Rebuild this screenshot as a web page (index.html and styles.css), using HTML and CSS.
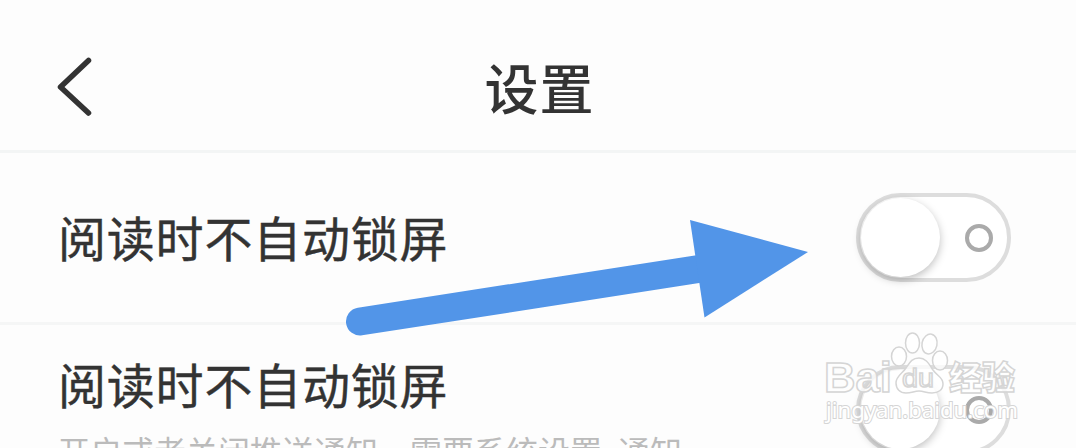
FILE: index.html
```
<!DOCTYPE html>
<html lang="zh-CN">
<head>
    <meta charset="UTF-8" />
    <meta name="viewport" content="width=device-width, initial-scale=1.0" />
    <title>设置</title>
    <link rel="stylesheet" href="styles.css">
</head>
<body>
    <header class="header">
        <a class="back" href="#" aria-label="返回">
            <svg width="36" height="60" viewBox="0 0 36 60" fill="none" stroke="#333" stroke-width="5.5" stroke-linecap="round" stroke-linejoin="round">
                <path d="M32.500 3.500L4.500 30L32.500 56" />
            </svg>
        </a>
        <h1 class="title">设置</h1>
    </header>

    <main class="settings">
        <div class="row">
            <div class="label">阅读时不自动锁屏</div>
            <button class="switch" type="button" aria-label="阅读时不自动锁屏">
                <span class="thumb"></span>
                <span class="ring"></span>
            </button>
        </div>
        <div class="row">
            <div class="text">
                <div class="label">阅读时不自动锁屏</div>
                <div class="desc">开启或者关闭推送通知，需要系统设置<span class="dash">-</span>通知</div>
            </div>
            <button class="switch" type="button" aria-label="推送通知">
                <span class="thumb"></span>
                <span class="ring"></span>
            </button>
        </div>
    </main>

    <!-- Arrow pointing at the first switch -->
    <svg class="arrow" width="464" height="120" viewBox="345 218 464 120">
        <path d="M360 321.5L705 268" stroke="#5295e8" stroke-width="28" stroke-linecap="round" fill="none" />
        <path d="M690 220L808 252L704.5 317.5Z" fill="#5295e8" />
    </svg>

    <!-- Watermark -->
    <svg class="watermark" width="200" height="100" viewBox="822 330 200 100">
        <g class="mark">
            <text class="latin" x="824" y="392" font-size="43" textLength="68" lengthAdjust="spacingAndGlyphs">Bai</text>
            <ellipse cx="899" cy="356.500" rx="7.500" ry="9.500" />
            <ellipse cx="912.500" cy="343" rx="7" ry="10" />
            <ellipse cx="929.500" cy="344" rx="7.500" ry="10" transform="rotate(12 929.500 344)" />
            <ellipse cx="940" cy="360.500" rx="7.500" ry="9.500" />
            <path d="M919 358C926 358 929 364 933 370C938 377 943 377 943 384C943 390 938 393 932 393C926 393 924 391 919 391C914 391 912 393 906 393C900 393 896 389 896 383C896 376 902 374 906 368C910 362 912 358 919 358Z" />
            <text class="latin du" x="902" y="387" font-size="26" textLength="32" lengthAdjust="spacingAndGlyphs">du</text>
            <text class="cjk" x="949" y="390" font-size="33">经验</text>
            <text class="url" x="826" y="418" font-size="22" textLength="192" lengthAdjust="spacingAndGlyphs">jingyan.baidu.com</text>
        </g>
    </svg>
</body>
</html>
```
FILE: styles.css
```
* {
    box-sizing: border-box;
}

body {
    position: relative;
    height: 448px;
    margin: 0;
    overflow: hidden;
    background-color: #fdfdfd;
    color: #333;
    font-family: "Noto Sans CJK SC", sans-serif;
}

.header {
    display: grid;
    grid-template-columns: 1fr auto 1fr;
    align-items: center;
    height: 153px;
    padding: 24px 53px 0 56px;
    border-bottom: 3px solid #f3f5f5;
}

.back {
    display: flex;
}

.title {
    margin: 0;
    font-size: 54px;
    font-weight: 500;
    line-height: 80px;
    letter-spacing: 1px;
}

.row {
    display: flex;
    align-items: center;
    justify-content: space-between;
    height: 172px;
    padding: 0 65px 0 58px;
    border-bottom: 3px solid #f5f6f6;
}

.label {
    margin-bottom: 4px;
    font-size: 48px;
    line-height: 72px;
    letter-spacing: 0.8px;
    white-space: nowrap;
    -webkit-text-stroke: 0.4px #333;
}

.desc {
    margin-top: 8px;
    color: #bbb;
    font-size: 32px;
    line-height: 46px;
    white-space: nowrap;
}

.dash {
    display: inline-block;
    width: 16px;
    line-height: 1;
    text-align: center;
    vertical-align: 3px;
}

.switch {
    display: flex;
    align-items: center;
    justify-content: space-between;
    width: 155px;
    height: 89px;
    padding: 0 14px 0 1px;
    border: 4px solid #ddd;
    border-radius: 45px;
    background-color: #fff;
}

.thumb {
    width: 79px;
    height: 79px;
    border-radius: 50%;
    background-color: #fff;
    box-shadow: 0 3px 9px rgba(0, 0, 0, 0.25);
}

.ring {
    width: 28px;
    height: 28px;
    border: 4px solid #aaa;
    border-radius: 50%;
}

.arrow {
    position: absolute;
    left: 345px;
    top: 218px;
}

.watermark {
    position: absolute;
    left: 822px;
    top: 330px;
}

.mark {
    fill: rgba(255, 255, 255, 0.8);
    stroke: #d5d5d5;
    stroke-width: 1.5px;
}

.latin {
    font-family: "Liberation Sans", sans-serif;
    font-weight: 700;
}

.du {
    font-weight: 400;
}

.cjk {
    font-weight: 900;
}

.url {
    font-family: "Noto Sans", sans-serif;
    stroke: #d5d5d5;
    stroke-width: 2px;
    paint-order: stroke;
    fill: #fff;
}
```
